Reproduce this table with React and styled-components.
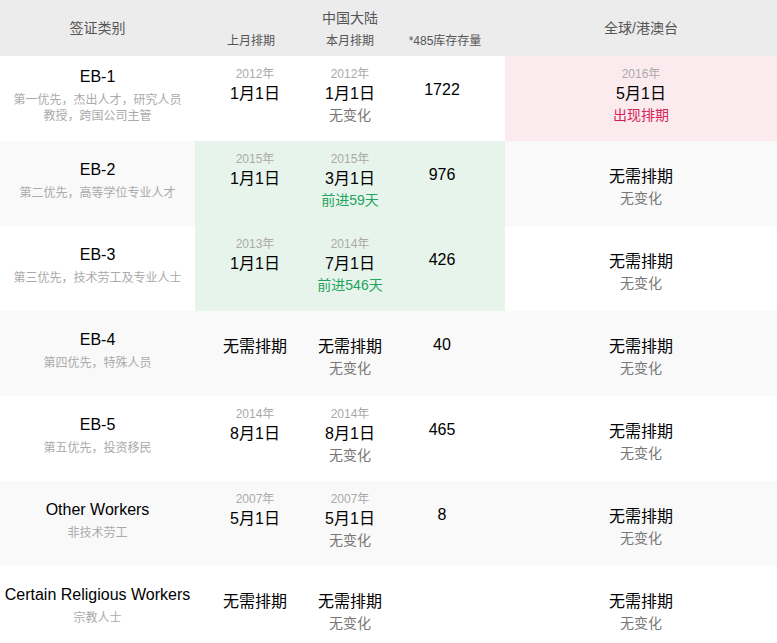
import React from "react";
import styled, { createGlobalStyle } from "styled-components";

const GlobalStyle = createGlobalStyle`
  body {
    margin: 0;
    background: #fff;
    font-family: "Liberation Sans", "Noto Sans CJK SC", sans-serif;
  }
`;

const COLS = "195px 120px 70px 120px 1fr";

const Table = styled.div`
  width: 777px;
`;

const Header = styled.div`
  display: grid;
  grid-template-columns: ${COLS};
  grid-template-rows: 30px 26px;
  background: #ececec;
  color: #555;
  text-align: center;
`;

const HeadMain = styled.div`
  grid-row: 1 / 3;
  grid-column: ${(p) => p.col};
  align-self: center;
  font-size: 14px;
  line-height: 20px;
`;

const HeadGroup = styled.div`
  grid-row: 1;
  grid-column: 2 / 5;
  align-self: end;
  margin-bottom: 2px;
  font-size: 14px;
  line-height: 20px;
`;

const HeadSub = styled.div`
  grid-row: 2;
  grid-column: ${(p) => p.col};
  align-self: start;
  padding-right: ${(p) => p.shift || 0}px;
  font-size: 12px;
  line-height: 23px;
  white-space: nowrap;
`;

const Row = styled.div`
  display: grid;
  grid-template-columns: ${COLS};
  height: 85px;
  background: ${(p) => (p.striped ? "#f9f9f9" : "#fff")};
  text-align: center;
`;

const CategoryCell = styled.div`
  display: flex;
  flex-direction: column;
  justify-content: center;
  padding-bottom: 8px;
`;

const CategoryName = styled.div`
  font-size: 16px;
  line-height: 22px;
  color: #000;
  margin-bottom: 4px;
  white-space: nowrap;
`;

const CategoryDesc = styled.div`
  font-size: 12px;
  line-height: 16px;
  color: #aaa;
`;

const DateCell = styled.div`
  padding-top: ${(p) => (p.empty ? "24px" : "10px")};
  background: ${(p) => p.tint || "transparent"};
`;

const Year = styled.div`
  font-size: 12px;
  line-height: 16px;
  color: #aaa;
`;

const DateText = styled.div`
  font-size: 16px;
  line-height: 24px;
  color: #000;
`;

const Change = styled.div`
  font-size: 14px;
  line-height: 18px;
  color: ${(p) =>
    p.kind === "up" ? "#23a45c" : p.kind === "new" ? "#d71f57" : "#777"};
`;

const StockCell = styled.div`
  padding-top: 22px;
  padding-right: 6px;
  font-size: 16px;
  line-height: 24px;
  color: #000;
  background: ${(p) => p.tint || "transparent"};
`;

const GREEN = "#e7f4ec";
const PINK = "#fbebef";

const rows = [
  {
    name: "EB-1",
    desc: ["第一优先，杰出人才，研究人员", "教授，跨国公司主管"],
    last: { year: "2012年", date: "1月1日" },
    cur: { year: "2012年", date: "1月1日", change: "无变化" },
    stock: "1722",
    world: { year: "2016年", date: "5月1日", change: "出现排期", kind: "new" },
    worldTint: PINK,
  },
  {
    name: "EB-2",
    desc: ["第二优先，高等学位专业人才"],
    last: { year: "2015年", date: "1月1日" },
    cur: { year: "2015年", date: "3月1日", change: "前进59天", kind: "up" },
    stock: "976",
    world: { date: "无需排期", change: "无变化" },
    tint: GREEN,
  },
  {
    name: "EB-3",
    desc: ["第三优先，技术劳工及专业人士"],
    last: { year: "2013年", date: "1月1日" },
    cur: { year: "2014年", date: "7月1日", change: "前进546天", kind: "up" },
    stock: "426",
    world: { date: "无需排期", change: "无变化" },
    tint: GREEN,
  },
  {
    name: "EB-4",
    desc: ["第四优先，特殊人员"],
    last: { date: "无需排期" },
    cur: { date: "无需排期", change: "无变化" },
    stock: "40",
    world: { date: "无需排期", change: "无变化" },
  },
  {
    name: "EB-5",
    desc: ["第五优先，投资移民"],
    last: { year: "2014年", date: "8月1日" },
    cur: { year: "2014年", date: "8月1日", change: "无变化" },
    stock: "465",
    world: { date: "无需排期", change: "无变化" },
  },
  {
    name: "Other Workers",
    desc: ["非技术劳工"],
    last: { year: "2007年", date: "5月1日" },
    cur: { year: "2007年", date: "5月1日", change: "无变化" },
    stock: "8",
    world: { date: "无需排期", change: "无变化" },
  },
  {
    name: "Certain Religious Workers",
    desc: ["宗教人士"],
    last: { date: "无需排期" },
    cur: { date: "无需排期", change: "无变化" },
    stock: "",
    world: { date: "无需排期", change: "无变化" },
  },
];

const Dates = ({ data, tint }) => (
  <DateCell empty={!data.year} tint={tint}>
    {data.year && <Year>{data.year}</Year>}
    <DateText>{data.date}</DateText>
    {data.change && <Change kind={data.kind}>{data.change}</Change>}
  </DateCell>
);

const App = () => {
  return (
    <Table>
      <GlobalStyle />
      <Header>
        <HeadMain col={1}>签证类别</HeadMain>
        <HeadGroup>中国大陆</HeadGroup>
        <HeadSub col={2} shift={8}>上月排期</HeadSub>
        <HeadSub col={3}>本月排期</HeadSub>
        <HeadSub col={4}>*485库存存量</HeadSub>
        <HeadMain col={5}>全球/港澳台</HeadMain>
      </Header>
      {rows.map((row, i) => (
        <Row key={row.name} striped={i % 2 === 1}>
          <CategoryCell>
            <CategoryName>{row.name}</CategoryName>
            {row.desc.map((line) => (
              <CategoryDesc key={line}>{line}</CategoryDesc>
            ))}
          </CategoryCell>
          <Dates data={row.last} tint={row.tint} />
          <Dates data={row.cur} tint={row.tint} />
          <StockCell tint={row.tint}>{row.stock}</StockCell>
          <Dates data={row.world} tint={row.worldTint} />
        </Row>
      ))}
    </Table>
  );
};

export default App;
